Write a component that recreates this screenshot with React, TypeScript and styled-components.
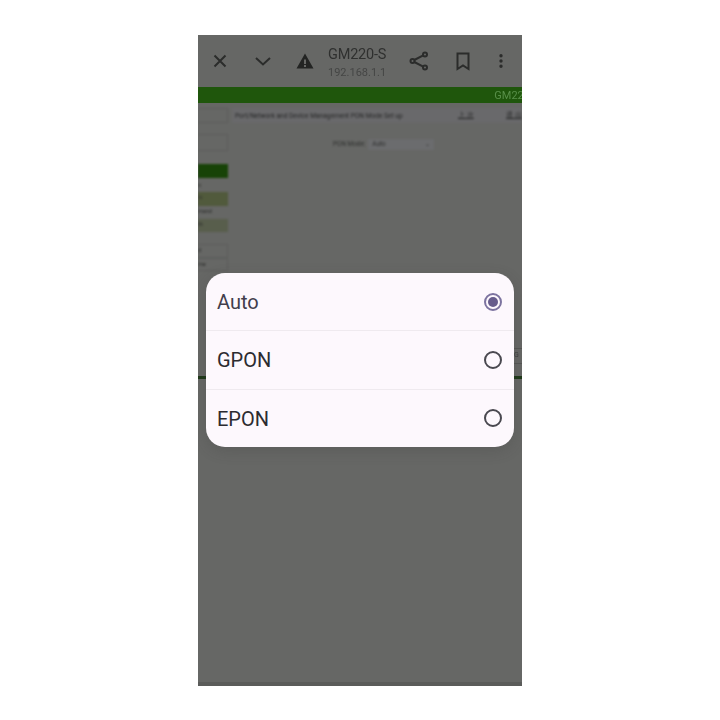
import React from 'react'
import styled, { createGlobalStyle } from 'styled-components'

const GlobalStyle = createGlobalStyle`
  html, body {
    margin: 0;
    padding: 0;
    background: #fff;
    font-family: Roboto, "Liberation Sans", sans-serif;
  }
`

const Phone = styled.div`
  position: relative;
  display: flex;
  flex-direction: column;
  width: 324px;
  height: 651px;
  margin: 35px auto 0;
  background: #666765;
  overflow: hidden;
`

const Toolbar = styled.div`
  display: flex;
  align-items: center;
  height: 52px;
  flex: none;
  filter: blur(0.5px);
`

const ToolIcon = styled.svg<{ $left: number }>`
  flex: none;
  width: 24px;
  height: 24px;
  margin-left: ${({ $left }) => $left}px;
  fill: none;
  stroke: #2b2c2b;
  stroke-width: 2;
`

const TitleBlock = styled.div`
  flex: none;
  width: 66px;
  margin-left: 11px;
  padding-top: 3px;
`

const Title = styled.div`
  font-size: 14.5px;
  line-height: 18px;
  letter-spacing: -0.2px;
  color: #2f302f;
  white-space: nowrap;
`

const Subtitle = styled.div`
  font-size: 11px;
  line-height: 15px;
  margin-top: 1px;
  color: #454645;
  white-space: nowrap;
`

const GreenBar = styled.div`
  flex: none;
  display: flex;
  justify-content: flex-end;
  align-items: center;
  height: 16px;
  background: #1f560c;
  color: #588f49;
  font-size: 11px;
  overflow: hidden;
  filter: blur(0.6px);
`

const BarLabel = styled.span`
  margin-right: -8px;
  white-space: nowrap;
`

const Behind = styled.div`
  flex: none;
  display: flex;
  height: 273px;
  filter: blur(0.8px);
`

const Sidebar = styled.div`
  flex: none;
  display: flex;
  flex-direction: column;
  width: 30px;
  padding-top: 5px;
`

const SideItem = styled.div<{ $h: number; $gap: number; $bg?: string; $line?: boolean }>`
  height: ${({ $h }) => $h}px;
  margin-top: ${({ $gap }) => $gap}px;
  background: ${({ $bg }) => $bg || 'transparent'};
  border-top: ${({ $line }) => ($line ? '1px solid #5d5e5c' : 'none')};
  border-bottom: ${({ $line }) => ($line ? '1px solid #5d5e5c' : 'none')};
  border-right: ${({ $line }) => ($line ? '1px solid #5d5e5c' : 'none')};
  box-sizing: border-box;
  color: #2b2c2a;
  font-size: 5.5px;
  line-height: 10px;
  white-space: nowrap;
  overflow: hidden;
`

const Main = styled.div`
  flex: 1;
  display: flex;
  flex-direction: column;
  min-width: 0;
  padding: 5px 0 0 4px;
`

const Heading = styled.div`
  display: flex;
  align-items: center;
  height: 15px;
  padding-left: 3px;
  background: #69696b;
  color: #262727;
  font-size: 6.6px;
  white-space: nowrap;
  overflow: hidden;
`

const HeadingText = styled.span`
  width: 223px;
  flex: none;
`

const HeadingLink = styled.span`
  flex: none;
  width: 48px;
  text-decoration: underline;
`

const ModeRow = styled.div`
  display: flex;
  align-items: center;
  height: 12px;
  margin: 15px 0 0 101px;
  color: #2d2e2d;
  font-size: 6.4px;
`

const ModeSelect = styled.div`
  display: flex;
  align-items: center;
  justify-content: space-between;
  width: 66px;
  height: 11px;
  margin-left: 3px;
  padding: 0 4px;
  box-sizing: border-box;
  background: #6b6c6e;
`

const FooterLine = styled.div`
  flex: none;
  height: 3px;
  background: #1e3818;
  filter: blur(0.5px);
`

const SideNote = styled.div`
  position: absolute;
  right: 0;
  top: 313px;
  width: 8px;
  height: 14px;
  border-top: 1px solid #555654;
  border-bottom: 1px solid #555654;
  color: #3a3b3a;
  font-size: 7px;
  line-height: 13px;
  overflow: hidden;
  filter: blur(0.5px);
`

const BottomEdge = styled.div`
  margin-top: auto;
  flex: none;
  height: 4px;
  background: #5b5c5a;
`

const Dialog = styled.div`
  position: absolute;
  left: 8px;
  top: 238px;
  width: 308px;
  height: 174px;
  display: flex;
  flex-direction: column;
  background: #fdf8fd;
  border-radius: 19px;
  box-shadow: 0 4px 14px rgba(60, 60, 60, 0.22);
  overflow: hidden;
`

const Option = styled.div<{ $divider: boolean }>`
  flex: 1;
  display: flex;
  align-items: center;
  justify-content: space-between;
  padding: 0 12px 0 11px;
  border-top: ${({ $divider }) => ($divider ? '1px solid #efeaef' : 'none')};
`

const OptionLabel = styled.span<{ $accent: boolean }>`
  padding-top: 1px;
  font-size: 20px;
  color: ${({ $accent }) => ($accent ? '#423e4c' : '#2c2b30')};
`

const Radio = styled.span<{ $on: boolean }>`
  display: flex;
  align-items: center;
  justify-content: center;
  width: 18px;
  height: 18px;
  box-sizing: border-box;
  border-radius: 50%;
  border: 2px solid ${({ $on }) => ($on ? '#7d74a0' : '#4a4950')};

  &::after {
    content: '';
    display: ${({ $on }) => ($on ? 'block' : 'none')};
    width: 10px;
    height: 10px;
    border-radius: 50%;
    background: #675c8c;
  }
`

const sideItems = [
  { h: 15, gap: 0, line: true },
  { h: 17, gap: 11, line: true },
  { h: 14, gap: 13, bg: '#174307' },
  { h: 11, gap: 2, text: 'n' },
  { h: 14, gap: 1, bg: '#515a3c', text: 'rc' },
  { h: 11, gap: 0, text: 'mand' },
  { h: 13, gap: 2, bg: '#585e4c', text: 'th' },
  { h: 14, gap: 12, line: true, text: '  d' },
  { h: 13, gap: 0, line: true, text: 'me' },
]

const options = ['Auto', 'GPON', 'EPON']

export default function App() {
  return (
    <>
      <GlobalStyle />
      <Phone>
        <Toolbar>
          <ToolIcon $left={10} viewBox="0 0 24 24">
            <path d="M6.5 6.5l11 11M17.500 6.500l-11 11" />
          </ToolIcon>
          <ToolIcon $left={19} viewBox="0 0 24 24">
            <path d="M5 9l7 6.500L19 9" />
          </ToolIcon>
          <ToolIcon $left={18} viewBox="0 0 24 24" style={{ stroke: 'none' }}>
            <path d="M12 4.500L3.500 19.500h17zM11 10.500h2v4.500h-2zM11 16h2v2h-2z" fill="#232423" fillRule="evenodd" />
          </ToolIcon>
          <TitleBlock>
            <Title>GM220-S</Title>
            <Subtitle>192.168.1.1</Subtitle>
          </TitleBlock>
          <ToolIcon $left={13} viewBox="0 0 24 24">
            <circle cx="18" cy="5.500" r="2" />
            <circle cx="5.500" cy="12" r="2" />
            <circle cx="18" cy="18.500" r="2" />
            <path d="M7.300 11l8.900-4.600M7.300 13l8.900 4.600" />
          </ToolIcon>
          <ToolIcon $left={20} viewBox="0 0 24 24">
            <path d="M6.500 4.500h11v15.500L12 16.500 6.500 20z" />
          </ToolIcon>
          <ToolIcon $left={14} viewBox="0 0 24 24" style={{ stroke: 'none' }}>
            <path d="M12 5a1.700 1.700 0 100 3.400A1.700 1.700 0 0012 5zM12 10.300a1.700 1.700 0 100 3.400 1.700 1.700 0 000-3.400zM12 15.600a1.700 1.700 0 100 3.400 1.700 1.700 0 000-3.400z" fill="#2b2c2b" />
          </ToolIcon>
        </Toolbar>
        <GreenBar>
          <BarLabel>GM220</BarLabel>
        </GreenBar>
        <Behind>
          <Sidebar>
            {sideItems.map((item, i) => (
              <SideItem key={i} $h={item.h} $gap={item.gap} $bg={item.bg} $line={item.line}>
                {item.text}
              </SideItem>
            ))}
          </Sidebar>
          <Main>
            <Heading>
              <HeadingText>Port/Network and Device Management PON Mode Set up</HeadingText>
              <HeadingLink>上 次</HeadingLink>
              <HeadingLink>退 出</HeadingLink>
            </Heading>
            <ModeRow>
              PON Mode:
              <ModeSelect>
                <span>Auto</span>
                <span>⌄</span>
              </ModeSelect>
            </ModeRow>
          </Main>
        </Behind>
        <FooterLine />
        <BottomEdge />
        <SideNote>G</SideNote>
        <Dialog>
          {options.map((label, i) => (
            <Option key={label} $divider={i > 0}>
              <OptionLabel $accent={i === 0}>{label}</OptionLabel>
              <Radio $on={i === 0} />
            </Option>
          ))}
        </Dialog>
      </Phone>
    </>
  )
}
